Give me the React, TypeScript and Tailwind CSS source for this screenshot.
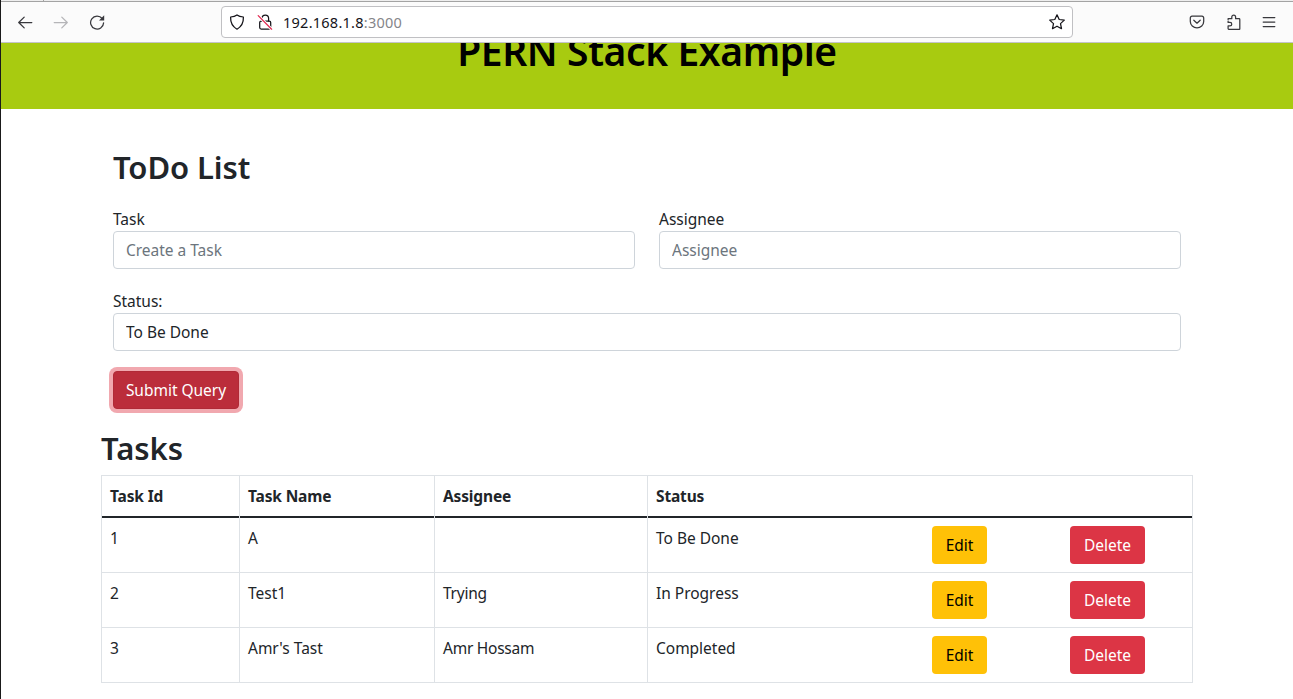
import type { ReactNode } from 'react';

const rows = [
  { id: '1', name: 'A', assignee: '', status: 'To Be Done' },
  { id: '2', name: 'Test1', assignee: 'Trying', status: 'In Progress' },
  { id: '3', name: "Amr's Tast", assignee: 'Amr Hossam', status: 'Completed' },
];

function Icon({ children, className = '' }: { children: ReactNode; className?: string }) {
  return (
    <svg
      viewBox="0 0 16 16"
      className={`h-4 w-4 shrink-0 ${className}`}
      fill="none"
      stroke="currentColor"
      strokeWidth="1.25"
      strokeLinecap="round"
      strokeLinejoin="round"
    >
      {children}
    </svg>
  );
}

function Toolbar() {
  return (
    <header className="flex h-[43px] shrink-0 flex-col border-b border-[#c4c4c8] bg-[#fbfbfb]">
      <div className="flex h-[2px] shrink-0 border-b border-[#a3a3a3] bg-[#eeeeee]">
        <div className="w-[43px] border-r border-[#a3a3a3]" />
      </div>
      <div className="flex h-10 items-center pl-4 text-[#38383d]">
        <Icon>
          <path d="M14.8 8.500H1.700M7.200 3.100 1.700 8.500l5.500 5.400" />
        </Icon>
        <Icon className="ml-5 text-[#b5b5b8]">
          <path d="M1.200 8.500h13.100M8.800 3.100 14.300 8.500l-5.500 5.400" />
        </Icon>
        <Icon className="ml-5">
          <path d="M13.200 4.500A6.500 6.500 0 1 0 14.600 8.900" />
          <path d="M15.200 1.300v5.200H10Z" fill="currentColor" stroke="none" />
        </Icon>
        <div className="ml-[116px] flex h-8 w-[852px] items-center rounded-[4px] border border-[#c0c0c3] bg-white pr-[7px] pl-[7px] text-[#15141a]">
          <Icon>
            <path d="M8 .9c1.700 1.300 3.900 1.900 6.400 2.100.2 5.200-1.400 9.300-6.400 12.200C3 12.300 1.400 8.200 1.600 3 4.100 2.800 6.300 2.200 8 .9Z" />
          </Icon>
          <Icon className="ml-3">
            <rect x="2.7" y="7" width="11" height="8" rx="1.5" />
            <path d="M5 7V4.300a3.300 3.300 0 0 1 6.600 0V7" />
            <path d="m1.200 1.600 13.400 13.600" stroke="#fff" strokeWidth="3" />
            <path d="m1.200 1.600 13.400 13.600" stroke="#e22850" />
          </Icon>
          <span className="ml-[10px] text-[14.5px] leading-5 tracking-[0.25px] whitespace-nowrap">
            192.168.1.8<span className="text-[#858589]">:3000</span>
          </span>
          <Icon className="ml-auto">
            <path d="m8 .8 2.200 4.700 5.100.6-3.800 3.500 1 5.100L8 12.200l-4.500 2.500 1-5.100L.7 6.100l5.100-.6Z" />
          </Icon>
        </div>
        <Icon className="ml-[116px]">
          <path d="M3 2.200h10a1.700 1.700 0 0 1 1.700 1.700V7.600a6.700 6.200 0 0 1-13.400 0V3.900A1.700 1.700 0 0 1 3 2.200Z" />
          <path d="M4.800 6.200 8 9.200l3.200-3" />
        </Icon>
        <Icon className="ml-[21px]">
          <path d="M2.100 5.500V4.700h3.700V3a1.900 1.900 0 0 1 3.800 0v1.700h3.500a.7.7 0 0 1 .7.7v9.300a.7.7 0 0 1-.7.7H2.900a.8.8 0 0 1-.8-.8v-2.700h1.900a1.700 1.700 0 0 0 0-3.500H2.100V7.200" />
        </Icon>
        <Icon className="ml-[19px]">
          <path d="M2.200 3.500h11.600M2.200 8h11.600M2.200 12.500h11.600" />
        </Icon>
      </div>
    </header>
  );
}

function TaskForm() {
  return (
    <form className="px-3">
      <h2 className="text-[31px] leading-[38px] font-semibold tracking-[-0.1px]">ToDo List</h2>
      <div className="mt-[21px] grid grid-cols-2 gap-6">
        <label className="block">
          <span className="block h-6">Task</span>
          <input
            placeholder="Create a Task"
            className="block h-[38px] w-full rounded-[4px] border border-[#ced4da] px-3 placeholder:text-[#6c757d]"
          />
        </label>
        <label className="block">
          <span className="block h-6">Assignee</span>
          <input
            placeholder="Assignee"
            className="block h-[38px] w-full rounded-[4px] border border-[#ced4da] px-3 placeholder:text-[#6c757d]"
          />
        </label>
      </div>
      <label className="mt-5 block">
        <span className="block h-6">Status:</span>
        <select className="block h-[38px] w-full appearance-none rounded-[4px] border border-[#ced4da] bg-white px-3">
          <option>To Be Done</option>
        </select>
      </label>
      <button
        type="button"
        className="mt-5 block h-[38px] w-[126px] rounded-[4px] border border-[#b02a37] bg-[#bb2d3b] whitespace-nowrap text-white shadow-[0_0_0_4px_#f1a8af]"
      >
        Submit Query
      </button>
    </form>
  );
}

function TaskTable() {
  return (
    <table className="mt-2 w-full table-fixed border-separate border-spacing-0 border-t border-r border-[#dee2e6]">
      <colgroup>
        <col className="w-[138px]" />
        <col className="w-[195px]" />
        <col className="w-[213px]" />
        <col className="w-[277px]" />
        <col className="w-[138px]" />
        <col />
      </colgroup>
      <thead className="text-left tracking-[-0.15px]">
        <tr>
          {['Task Id', 'Task Name', 'Assignee', 'Status'].map((title) => (
            <th key={title} className="border-l border-[#dee2e6] p-0">
              <div className="h-[42px] border-b-2 border-[#212529] px-2 pt-2 font-bold">{title}</div>
            </th>
          ))}
          <th colSpan={2} className="p-0">
            <div className="h-[42px] border-b-2 border-[#212529]" />
          </th>
        </tr>
      </thead>
      <tbody>
        {rows.map((row) => (
          <tr key={row.id} className="h-[55px] align-top">
            <td className="border-b border-l border-[#dee2e6] px-2 pt-2">{row.id}</td>
            <td className="border-b border-l border-[#dee2e6] px-2 pt-2">{row.name}</td>
            <td className="border-b border-l border-[#dee2e6] px-2 pt-2 tracking-[-0.25px]">{row.assignee}</td>
            <td className="border-b border-l border-[#dee2e6] px-2 pt-2">{row.status}</td>
            <td className="border-b border-[#dee2e6] p-2">
              <button className="block h-[38px] w-[55px] rounded-[4px] bg-[#ffc107] text-black">Edit</button>
            </td>
            <td className="border-b border-[#dee2e6] p-2">
              <button className="block h-[38px] w-[75px] rounded-[4px] bg-[#dc3545] text-white">Delete</button>
            </td>
          </tr>
        ))}
      </tbody>
    </table>
  );
}

export default function App() {
  return (
    <div className="flex h-[699px] w-[1293px] flex-col overflow-hidden border-l border-[#1a1a1a] bg-white font-['Noto_Sans',sans-serif] text-[15.5px] leading-6 tracking-[-0.02px] text-[#212529]">
      <Toolbar />
      <div className="flex h-[66px] shrink-0 items-end justify-center overflow-hidden bg-[#a8cb10] pb-[34px]">
        <h1 className="text-[39px] leading-[48px] font-semibold tracking-[-0.4px] whitespace-nowrap text-black">
          PERN Stack Example
        </h1>
      </div>
      <main className="ml-[100px] w-[1092px] pt-[39px]">
        <TaskForm />
        <h2 className="mt-5 text-[31px] leading-[38px] font-semibold">Tasks</h2>
        <TaskTable />
      </main>
    </div>
  );
}
